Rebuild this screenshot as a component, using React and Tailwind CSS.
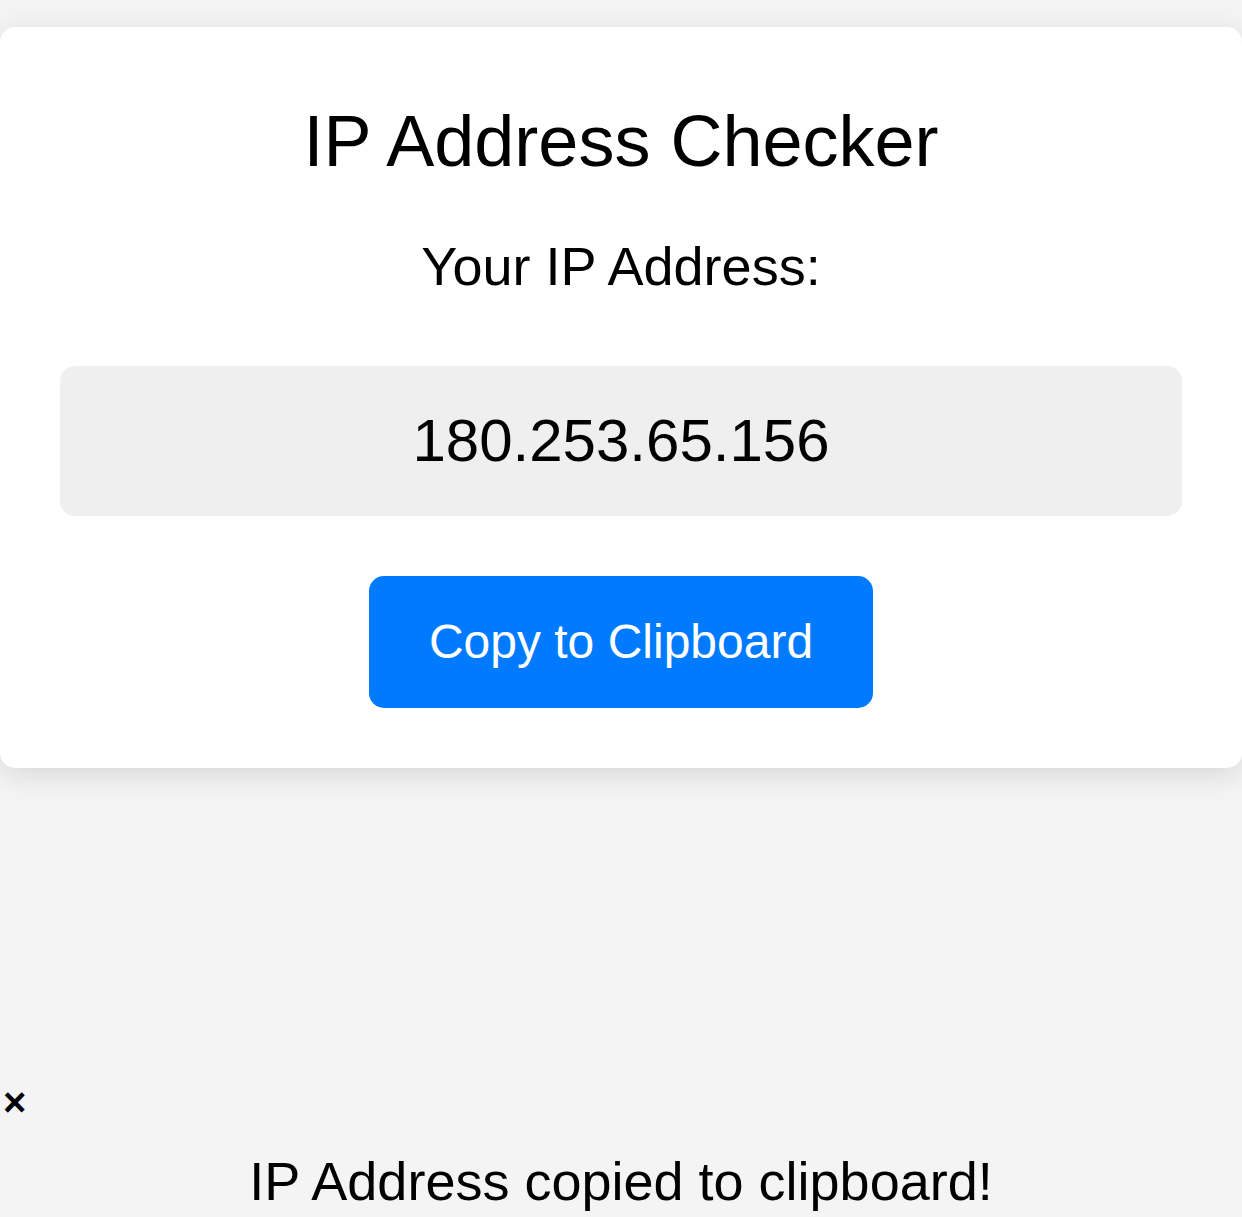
import React from 'react';

// IP Address Checker – rendered at 3x scale of a 414px mobile layout
export default function App() {
    const ip = '180.253.65.156';

    return (
        <div className="min-h-screen bg-[#f4f4f4] font-['Liberation_Sans',Arial,sans-serif] text-black overflow-hidden">

            {/* Card */}
            <div className="mt-[27px] bg-white rounded-[15px] shadow-[0_6px_30px_rgba(0,0,0,0.12)] px-[60px] pt-[73px] pb-[60px] text-center">
                <h1 className="text-[72px] leading-[1.15]">IP Address Checker</h1>
                <p className="mt-[52px] text-[54px] leading-[1.15]">Your IP Address:</p>

                <div className="mt-[69px] h-[150px] flex items-center justify-center bg-[#efefef] rounded-[15px]">
                    <span className="text-[60px] leading-[1.15]">{ip}</span>
                </div>

                <div className="mt-[60px] flex justify-center">
                    <button className="w-[504px] h-[132px] bg-[#007bff] text-white text-[48px] leading-[1.15] rounded-[15px]">
                        Copy to Clipboard
                    </button>
                </div>
            </div>

            {/* Toast */}
            <div className="mt-[311px]">
                <button className="block pl-[3px] text-[40px] font-bold leading-[1.15]">×</button>
                <p className="mt-[25px] text-center text-[54px] leading-[1.15]">IP Address copied to clipboard!</p>
            </div>

        </div>
    );
}
